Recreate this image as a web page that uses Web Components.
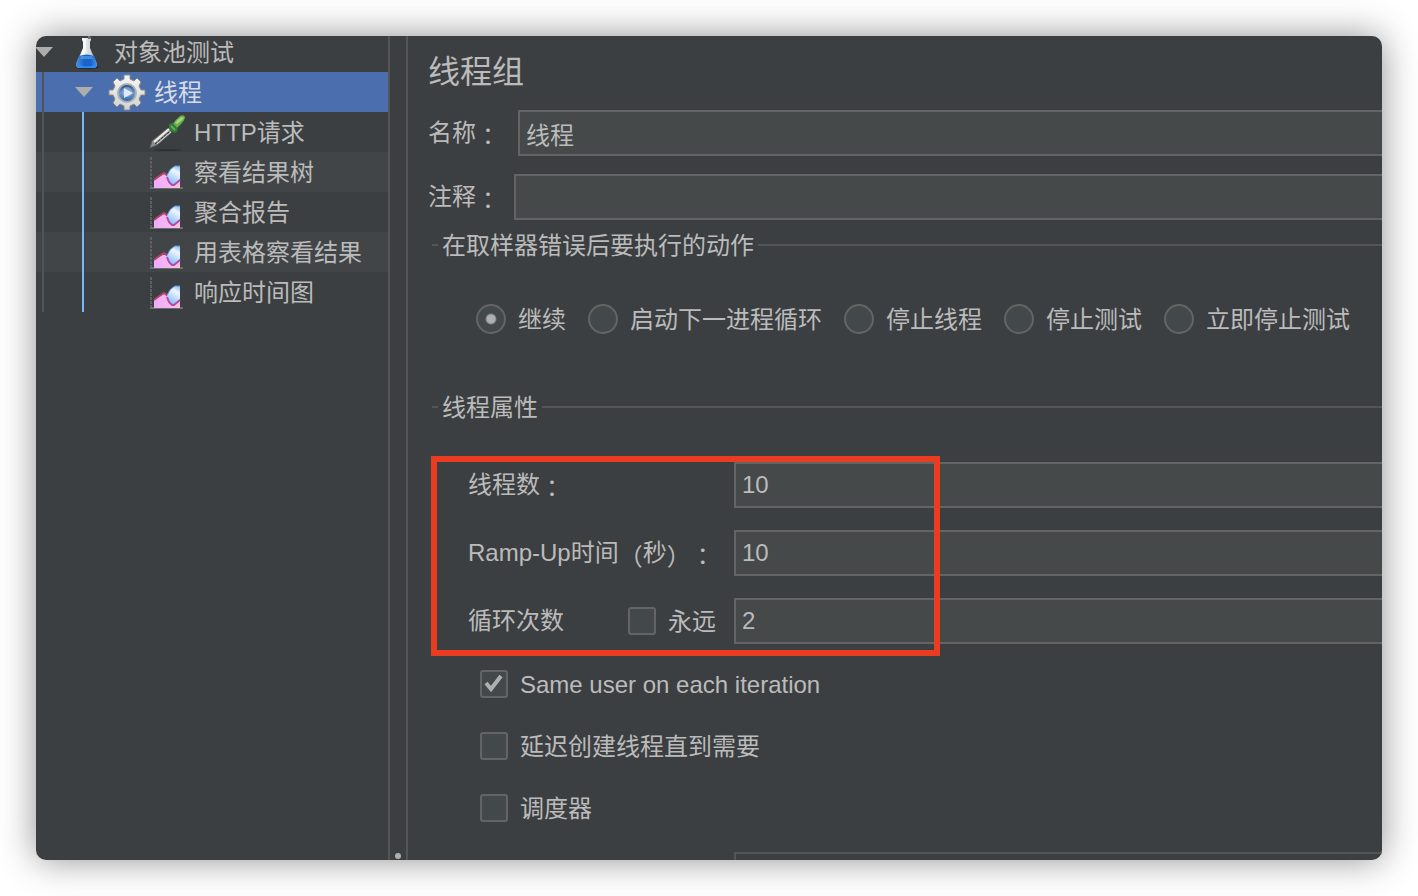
<!DOCTYPE html>
<html lang="zh-CN">
<head>
<meta charset="utf-8">
<title>线程组</title>
<style>
  html { --bg: #3c3f41; --field: #45494a; --edge: #646464; --line: #555555; --text: #bbbbbb; --accent: #4b6eaf; }
  body {
    margin: 0; min-height: 100vh; box-sizing: border-box; padding: 36px; display: flex;
    background: #fff; color: var(--text); text-spacing-trim: space-all;
    font: 24px/32px "Liberation Sans", "Noto Sans CJK SC", sans-serif;
  }
</style>
</head>
<body>
<app-window>
  <test-tree slot="side">
    <tree-row level="0" icon="flask" open>对象池测试</tree-row>
    <tree-row level="1" icon="gear" open selected>线程</tree-row>
    <tree-row level="2" icon="dropper">HTTP请求</tree-row>
    <tree-row level="2" icon="chart" striped>察看结果树</tree-row>
    <tree-row level="2" icon="chart">聚合报告</tree-row>
    <tree-row level="2" icon="chart" striped>用表格察看结果</tree-row>
    <tree-row level="2" icon="chart">响应时间图</tree-row>
  </test-tree>
  <thread-group-form></thread-group-form>
</app-window>

<script>
const define = (name, html, setup) => {
  const template = document.createElement('template');
  template.innerHTML = html;
  customElements.define(name, class extends HTMLElement {
    connectedCallback() {
      if (this.shadowRoot) return;
      const root = this.attachShadow({ mode: 'open' });
      root.append(template.content.cloneNode(true));
      if (setup) setup(this, root);
    }
  });
};

const icons = {
  flask: `<svg width="28" height="36" viewBox="0 0 28 36">
    <defs><linearGradient id="g"><stop offset="0" stop-color="#8f979c"/><stop offset=".3" stop-color="#f4f6f7"/><stop offset=".65" stop-color="#d4dadd"/><stop offset="1" stop-color="#8b9499"/></linearGradient>
    <linearGradient id="b"><stop offset="0" stop-color="#4a93e0"/><stop offset=".4" stop-color="#1a63c8"/><stop offset=".7" stop-color="#1a63c8"/><stop offset="1" stop-color="#3f94ee"/></linearGradient></defs>
    <ellipse cx="14" cy="33" rx="12" ry="2" fill="#26292c"/>
    <path d="M9 4h9v2l-1 2v6l7 16q0 4-3 4H6q-3 0-3-4l7-16V8L9 6z" fill="url(#g)"/>
    <path d="M10 5h3v11l-4 8H7l4-9z" fill="#fff" opacity=".7"/><path d="M15 1l3 2v2h-3z" fill="#6f7374"/>
    <path d="M6 22q8-3 15 0l3 8q0 4-3 4H6q-3 0-3-4z" fill="url(#b)"/>
    <path d="M8 22h11l1 3H7z" fill="#5aa7ee" opacity=".6"/><path d="M5 31q9 3 17 0l-1 3H6z" fill="#2d8eff"/></svg>`,
  gear: `<svg width="38" height="38" viewBox="0 0 38 38">
    <defs><linearGradient id="m" x2="0" y2="1"><stop offset="0" stop-color="#24477a"/><stop offset=".5" stop-color="#6f98cc"/><stop offset="1" stop-color="#31639f"/></linearGradient>
    <linearGradient id="s" x2="0" y2="1"><stop offset="0" stop-color="#f6f6f6"/><stop offset="1" stop-color="#d2d2cf"/></linearGradient></defs>
    <path d="M16 2h6v4l4 2 3-3 4 4-2 4 2 4h4v5h-4l-2 4 2 4-4 4-3-3-4 2v4h-6v-4l-4-2-3 3-4-4 2-4-2-4H1v-5h4l2-4-2-4 4-4 3 3 4-2z" fill="url(#s)" stroke="#8d8a84" stroke-width="1" stroke-linejoin="round"/>
    <circle cx="19" cy="20" r="9" fill="url(#m)" stroke="#a9b0b8" stroke-width="2"/>
    <circle cx="19" cy="19" r="5" fill="#9db9dc" opacity=".6"/>
    <path d="M16 15l9 5-9 5z" fill="#dfe9f5"/></svg>`,
  dropper: `<svg width="38" height="38" viewBox="0 0 38 38">
    <ellipse cx="20" cy="37" rx="14" ry="1" fill="#2e3133"/>
    <path d="M2 35l2-7L20 15l4 4L9 32z" fill="#8e918f" stroke="#5b5e5f"/>
    <path d="M6 29L21 16" stroke="#eef0ee" stroke-width="2"/><path d="M7 31L21 19" stroke="#2d3031" stroke-width="1" stroke-dasharray="3 1"/><path d="M9 31L23 19" stroke="#d5d8d6"/>
    <path d="M24 12q4-6 8-9 4-2 5 1 0 3-4 7l-6 6q-3 0-3-5z" fill="#69ae4b"/>
    <path d="M27 10q4-5 7-6l2 1q-4 4-7 6z" fill="#a3d97e"/>
    <path d="M21 11l4-1 5 6-2 4-4-1-3-4z" fill="#2f7d35"/><path d="M23 13l4 4" stroke="#5fae55" stroke-width="2"/></svg>`,
  chart: `<svg width="34" height="36" viewBox="0 0 34 36">
    <defs><linearGradient id="k"><stop offset="0" stop-color="#efaaff"/><stop offset="1" stop-color="#f8c3dc"/></linearGradient>
    <linearGradient id="u" x1="1" y1="0" x2=".6" y2="1"><stop offset="0" stop-color="#7db4f2"/><stop offset=".35" stop-color="#eef6ff"/><stop offset="1" stop-color="#8fc0f8"/></linearGradient></defs>
    <path d="M1 3v32" stroke="#5d6163" stroke-width="2" stroke-dasharray="3 1"/><path d="M0 34h33" stroke="#6a6e70" stroke-width="2"/>
    <path d="M4 26l4-3 6-4 4 3 4 9 8-6v9H4z" fill="url(#k)"/>
    <path d="M4 26l4-3 6-4 4 3" stroke="#b0446c" stroke-width="2" fill="none"/>
    <path d="M30 12v13l-6 6h-3q-5-4-4-9 3-8 8-10z" fill="url(#u)"/>
    <path d="M30 12h-5q-5 2-8 9" stroke="#5b94dc" fill="none"/>
    <path d="M17 23l2 5 3 3h2l6-5" stroke="#b24bb0" stroke-width="2" fill="none"/></svg>`
};

define('app-window', `
  <style>
    :host { flex: 1; min-width: 0; display: flex; overflow: hidden; border-radius: 10px; background: var(--bg); box-shadow: 0 0 36px rgba(0,0,0,.44); }
    .side { flex: 0 0 352px; }
    .split { flex: 0 0 16px; border: solid var(--line); border-width: 0 2px; display: flex; align-items: flex-end; justify-content: center; }
    .split::after { content: ""; width: 6px; height: 6px; margin-bottom: 1px; border-radius: 3px; background: #afafaf; }
    main { flex: 1; min-width: 0; }
  </style>
  <nav class="side"><slot name="side"></slot></nav>
  <div class="split"></div>
  <main><slot></slot></main>`);

define('test-tree', `
  <style>:host { display: block; margin-top: -4px; }</style>
  <div role="tree"><slot></slot></div>`);

define('tree-row', `
  <style>
    :host { display: flex; align-items: center; height: 40px; white-space: nowrap; }
    :host([striped]) { background: #414547; }
    :host([selected]) { background: var(--accent); color: #d8dce4; }
    .guide { flex: 0 0 40px; align-self: stretch; display: flex; padding-left: 6px; box-sizing: border-box; }
    .guide::before { content: ""; width: 2px; background: #515456; }
    .guide.near::before { background: #78b9f5; }
    .arrow { flex: 0 0 31px; display: flex; }
    .arrow svg { margin-left: -1px; }
    :host(:not([open])) .arrow svg { display: none; }
    .icon { flex: 0 0 40px; display: flex; justify-content: center; margin-right: 7px; }
    .text { padding-top: 2px; }
  </style>
  <span class="arrow"><svg width="18" height="10" viewBox="0 0 18 10"><path d="M0 0h18L9 10z" fill="#adadad"/></svg></span>
  <span class="icon"></span>
  <span class="text"><slot></slot></span>`,
  (host, root) => {
    host.setAttribute('role', 'treeitem');
    const level = Number(host.getAttribute('level'));
    const arrow = root.querySelector('.arrow');
    for (let i = 0; i < level; i++) {
      const guide = document.createElement('span');
      guide.className = i === 1 ? 'guide near' : 'guide';
      arrow.before(guide);
    }
    root.querySelector('.icon').innerHTML = icons[host.getAttribute('icon')];
  });

define('text-row', `
  <style>
    :host { display: flex; align-items: center; }
    label { flex: 0 0 var(--label, 86px); box-sizing: border-box; padding-left: var(--indent, 0px); white-space: nowrap; }
    i { font-style: normal; font-family: "Noto Sans CJK TC", sans-serif; line-height: 24px; vertical-align: -4px; }
    input { flex: 1; min-width: 0; height: 46px; box-sizing: border-box; margin: 0; padding: 0 6px; border: 2px solid var(--edge); border-right: 0; border-radius: 0; background: var(--field); color: inherit; font: inherit; outline: none; }
    slot[name=extra] { display: contents; }
  </style>
  <label for="v"></label><slot name="extra"></slot><input id="v" type="text">`,
  (host, root) => {
    root.querySelector('label').innerHTML = host.getAttribute('label').replace(/[：（）]/g, '<i lang="zh-TW">$&</i>');
    root.querySelector('input').value = host.getAttribute('value') || '';
  });

define('check-option', `
  <style>
    :host { display: flex; }
    label { display: flex; align-items: center; gap: 12px; height: 28px; white-space: nowrap; }
    span { padding-top: 2px; }
    input { appearance: none; flex: none; width: 28px; height: 28px; margin: 0; border: 2px solid var(--edge); border-radius: 3px; background: #43494a; }
    input:checked { background: #43494a url('data:image/svg+xml,<svg xmlns="http://www.w3.org/2000/svg" width="24" height="24"><path d="M4 11l5 6L19 4" fill="none" stroke="%23afafaf" stroke-width="4"/></svg>') center no-repeat; }
  </style>
  <label><input type="checkbox"><span><slot></slot></span></label>`,
  (host, root) => { root.querySelector('input').checked = host.hasAttribute('checked'); });

define('group-box', `
  <style>
    :host { display: block; }
    fieldset { border: 0; margin: 0; padding: 0; min-width: 0; }
    legend { display: flex; align-items: center; gap: 4px; width: 100%; height: 32px; box-sizing: border-box; padding: 0 0 0 4px; white-space: nowrap; }
    legend::before, legend::after { content: ""; width: 6px; height: 2px; background: var(--line); }
    legend::after { flex: 1; }
    span { padding-top: 2px; }
  </style>
  <fieldset><legend><span><slot name="title"></slot></span></legend><slot></slot></fieldset>`);

define('error-action', `
  <style>
    :host { display: flex; gap: 22px; padding: 43px 0 57px 48px; }
    label { display: flex; align-items: center; gap: 12px; height: 30px; white-space: nowrap; }
    span { padding-top: 2px; }
    input { appearance: none; flex: none; box-sizing: border-box; width: 30px; height: 30px; margin: 0; border: 2px solid var(--edge); border-radius: 50%; background: #43494a; }
    input:checked { background: radial-gradient(circle, #afafaf 4px, #43494a 6px); }
  </style>
  <label><input type="radio" name="action" checked><span>继续</span></label>
  <label><input type="radio" name="action"><span>启动下一进程循环</span></label>
  <label><input type="radio" name="action"><span>停止线程</span></label>
  <label><input type="radio" name="action"><span>停止测试</span></label>
  <label><input type="radio" name="action"><span>立即停止测试</span></label>`);

define('thread-group-form', `
  <style>
    :host { display: block; padding: 16px 0 0 20px; }
    h1 { margin: 0 0 18px; font-size: 32px; line-height: 40px; font-weight: 400; }
    .name { --label: 90px; margin-bottom: 18px; }
    .note { margin-bottom: 9px; }
    .counts { position: relative; display: grid; gap: 22px; margin-top: 39px; --label: 306px; --indent: 40px; }
    .loops { --label: 200px; }
    .loops check-option { flex: 0 0 106px; }
    .mark { position: absolute; box-sizing: border-box; left: 3px; top: -6px; width: 509px; height: 200px; border: 6px solid #e93c20; pointer-events: none; }
    .options { display: grid; gap: 34px; padding: 26px 0 30px 52px; }
    .next { height: 6px; margin-left: 306px; border: solid var(--line); border-width: 2px 0 0 2px; }
  </style>
  <h1>线程组</h1>
  <text-row class="name" label="名称：" value="线程"></text-row>
  <text-row class="note" label="注释："></text-row>
  <group-box>
    <span slot="title">在取样器错误后要执行的动作</span>
    <error-action></error-action>
  </group-box>
  <group-box>
    <span slot="title">线程属性</span>
    <div class="counts">
      <text-row label="线程数：" value="10"></text-row>
      <text-row label="Ramp-Up时间（秒）：" value="10"></text-row>
      <text-row class="loops" label="循环次数" value="2"><check-option slot="extra">永远</check-option></text-row>
      <div class="mark"></div>
    </div>
    <div class="options">
      <check-option checked>Same user on each iteration</check-option>
      <check-option>延迟创建线程直到需要</check-option>
      <check-option>调度器</check-option>
    </div>
    <div class="next"></div>
  </group-box>`);
</script>
</body>
</html>
